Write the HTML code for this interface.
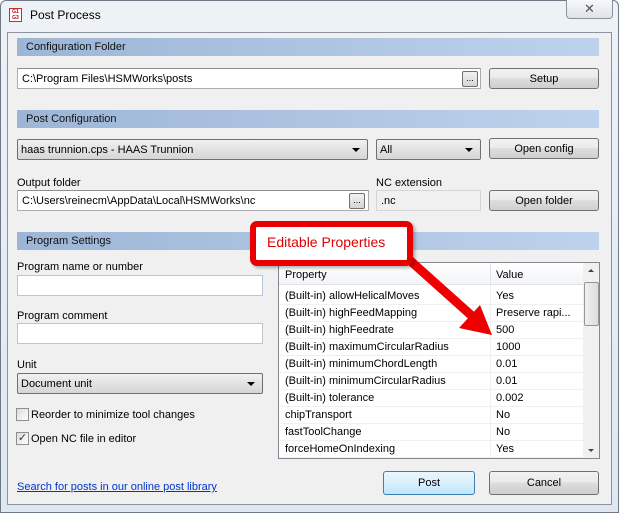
<!DOCTYPE html>
<html><head><style>
*{margin:0;padding:0;box-sizing:border-box}
body{width:619px;height:513px;overflow:hidden;background:#fff;font-family:"Liberation Sans",sans-serif;font-size:11px;color:#000;position:relative}
.a{position:absolute}
.hdr{position:absolute;left:17px;width:582px;height:18px;background:linear-gradient(90deg,#9db6d6,#bdd2ec);padding-left:9px;line-height:18px;font-size:11px;color:#111}
.inp{position:absolute;background:#fff;border:1px solid #abadb3;border-top-color:#8e9096;height:21px;line-height:20px;padding-left:4px;font-size:11px;white-space:nowrap}
.btn{position:absolute;border:1px solid #707070;border-radius:3px;background:linear-gradient(#f2f2f2 0,#ebebeb 45%,#dddddd 50%,#cfcfcf 100%);text-align:center;font-size:11px;line-height:20px}
.dots{position:absolute;width:16px;height:16px;border:1px solid #707070;border-radius:2px;background:linear-gradient(#f2f2f2,#d5d5d5);font-size:9px;line-height:12px;text-align:center}
.cmb{position:absolute;height:21px;border:1px solid #707070;border-radius:2px;background:linear-gradient(#f2f2f2,#e2e2e2 50%,#d6d6d6);line-height:20px;padding-left:3px;font-size:11px}
.cmb:after{content:"";position:absolute;right:7px;top:8px;border:4px solid transparent;border-top:4px solid #000;border-bottom:0}
.lbl{position:absolute;font-size:11px}
.cb{position:absolute;width:13px;height:13px;border:1px solid #8f8f8f;background:linear-gradient(135deg,#dcdcdc,#fff)}
.row{position:absolute;left:0;width:304px;height:17px;border-bottom:1px solid #f0f0f0;font-size:11px;line-height:17px}
.row span{position:absolute}
</style></head><body>
<div class="a" style="left:0;top:0;width:619px;height:513px;background:linear-gradient(#eef2f7,#dfe7f1);border:1px solid #707a86;border-radius:6px 6px 0 0"></div>
<div class="a" style="left:9px;top:8px;width:13px;height:14px;background:#fff;border:1px solid #c03030;font-size:5px;color:#c00;line-height:6px;text-align:center;font-weight:bold">G1<br>G3</div>
<div class="a" style="left:30px;top:8px;font-size:12px">Post Process</div>
<div class="a" style="left:566px;top:0;width:47px;height:19px;border:1px solid #8a929e;border-top:0;border-radius:0 0 4px 4px;background:linear-gradient(#f6f8fb,#dde3ea);text-align:center;font-size:13px;color:#555;line-height:17px">✕</div>
<div class="a" style="left:7px;top:32px;width:605px;height:473px;background:#f0f0f0;border:1px solid #8994a3"></div>

<div class="hdr" style="top:38px">Configuration Folder</div>
<div class="inp" style="left:17px;top:68px;width:464px">C:\Program Files\HSMWorks\posts</div>
<div class="dots" style="left:462px;top:71px">...</div>
<div class="btn" style="left:489px;top:68px;width:110px;height:21px">Setup</div>

<div class="hdr" style="top:110px">Post Configuration</div>
<div class="cmb" style="left:17px;top:139px;width:351px">haas trunnion.cps - HAAS Trunnion</div>
<div class="cmb" style="left:376px;top:139px;width:105px">All</div>
<div class="btn" style="left:489px;top:138px;width:110px;height:21px">Open config</div>

<div class="lbl" style="left:17px;top:177px">Output folder</div>
<div class="lbl" style="left:376px;top:177px">NC extension</div>
<div class="inp" style="left:17px;top:190px;width:352px">C:\Users\reinecm\AppData\Local\HSMWorks\nc</div>
<div class="dots" style="left:349px;top:193px">...</div>
<div class="inp" style="left:376px;top:190px;width:105px;background:#f0f0f0;border-color:#d5d5d5">.nc</div>
<div class="btn" style="left:489px;top:190px;width:110px;height:21px">Open folder</div>

<div class="hdr" style="top:232px">Program Settings</div>
<div class="lbl" style="left:17px;top:261px">Program name or number</div>
<div class="inp" style="left:17px;top:275px;width:246px;border-color:#b8c8dc"></div>
<div class="lbl" style="left:17px;top:310px">Program comment</div>
<div class="inp" style="left:17px;top:323px;width:246px;border-color:#c5c5c5"></div>
<div class="lbl" style="left:17px;top:359px">Unit</div>
<div class="cmb" style="left:17px;top:373px;width:246px">Document unit</div>
<div class="cb" style="left:16px;top:408px"></div>
<div class="lbl" style="left:31px;top:409px">Reorder to minimize tool changes</div>
<div class="cb" style="left:16px;top:432px;font-size:11px;line-height:10px;text-align:center;color:#333">✓</div>
<div class="lbl" style="left:31px;top:433px">Open NC file in editor</div>
<div class="lbl" style="left:17px;top:481px;color:#0033cc;text-decoration:underline">Search for posts in our online post library</div>

<div class="a" style="left:278px;top:262px;width:322px;height:197px;background:#fff;border:1px solid #828790;overflow:hidden">
 <div class="a" style="left:0;top:0;width:304px;height:22px;background:linear-gradient(#fff,#f3f4f6);border-bottom:1px solid #e0e2e6"></div>
 <div class="a" style="left:211px;top:0;width:1px;height:22px;background:#e0e2e6"></div>
 <div class="a" style="left:6px;top:6px">Property</div>
 <div class="a" style="left:217px;top:6px">Value</div>
 <div class="a" style="left:211px;top:22px;width:1px;height:175px;background:#f0f0f0"></div>
 <div class="row" style="top:25px"><span style="left:6px">(Built-in) allowHelicalMoves</span><span style="left:217px">Yes</span></div>
 <div class="row" style="top:42px"><span style="left:6px">(Built-in) highFeedMapping</span><span style="left:217px">Preserve rapi...</span></div>
 <div class="row" style="top:59px"><span style="left:6px">(Built-in) highFeedrate</span><span style="left:217px">500</span></div>
 <div class="row" style="top:76px"><span style="left:6px">(Built-in) maximumCircularRadius</span><span style="left:217px">1000</span></div>
 <div class="row" style="top:93px"><span style="left:6px">(Built-in) minimumChordLength</span><span style="left:217px">0.01</span></div>
 <div class="row" style="top:110px"><span style="left:6px">(Built-in) minimumCircularRadius</span><span style="left:217px">0.01</span></div>
 <div class="row" style="top:127px"><span style="left:6px">(Built-in) tolerance</span><span style="left:217px">0.002</span></div>
 <div class="row" style="top:144px"><span style="left:6px">chipTransport</span><span style="left:217px">No</span></div>
 <div class="row" style="top:161px"><span style="left:6px">fastToolChange</span><span style="left:217px">No</span></div>
 <div class="row" style="top:178px"><span style="left:6px">forceHomeOnIndexing</span><span style="left:217px">Yes</span></div>
 <div class="a" style="left:304px;top:0;width:17px;height:197px;background:#f0f0f0"></div>
 <div class="a" style="left:309px;top:6px;border:3px solid transparent;border-bottom:3px solid #444;border-top:0"></div>
 <div class="a" style="left:309px;top:186px;border:3px solid transparent;border-top:3px solid #444;border-bottom:0"></div>
 <div class="a" style="left:305px;top:19px;width:15px;height:44px;border:1px solid #979797;border-radius:2px;background:linear-gradient(90deg,#f0f0f0,#dcdcdc)"></div>
</div>

<div class="btn" style="left:383px;top:471px;width:92px;height:24px;line-height:22px;border-color:#3c7fb1;background:linear-gradient(#eaf6fd,#d9f0fc 50%,#bee6fd)">Post</div>
<div class="btn" style="left:489px;top:471px;width:110px;height:24px;line-height:22px">Cancel</div>

<svg class="a" style="left:0;top:0" width="619" height="513">
 <line x1="405" y1="256" x2="472" y2="316" stroke="#e00" stroke-width="9"/>
 <polygon points="492,335 459,328 480,305" fill="#e00"/>
</svg>
<div class="a" style="left:250px;top:221px;width:163px;height:45px;border:6px solid #e80000;border-radius:7px;background:#fff;box-shadow:2px 2px 3px rgba(0,0,0,.3)"></div>
<div class="a" style="left:267px;top:234px;font-size:14px;color:#e00000">Editable Properties</div>
</body></html>
